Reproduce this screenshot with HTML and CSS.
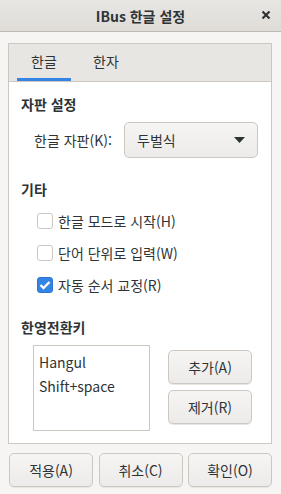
FILE: index.html
```html
<!DOCTYPE html>
<html lang="ko">
<head>
    <meta charset="UTF-8">
    <title>IBus 한글 설정</title>
    <link rel="stylesheet" href="styles.css">
</head>
<body>
    <div class="titlebar">
        <span class="title">IBus 한글 설정</span>
        <span class="close">
            <svg width="10" height="10" viewBox="0 0 10 10"><path d="M1.5 1.5 L8.5 8.5 M8.5 1.5 L1.5 8.5" stroke="#2e3436" stroke-width="2.2"/></svg>
        </span>
    </div>

    <div class="main">
        <div class="notebook">
            <div class="tabs">
                <div class="tab active">한글</div>
                <div class="tab">한자</div>
            </div>
            <div class="page">
                <h3>자판 설정</h3>
                <div class="row">
                    <span class="label">한글 자판(K):</span>
                    <div class="combo">
                        <span>두벌식</span>
                        <svg width="11" height="6" viewBox="0 0 11 6"><path d="M0 0 H11 L5.5 6 Z" fill="#2e3436"/></svg>
                    </div>
                </div>

                <h3 class="etc">기타</h3>
                <ul class="checks">
                    <li><span class="box"></span>한글 모드로 시작(H)</li>
                    <li><span class="box"></span>단어 단위로 입력(W)</li>
                    <li><span class="box on"><svg width="12" height="10" viewBox="0 0 12 10"><path d="M1.5 5 L4.5 8 L10.5 2" fill="none" stroke="#fff" stroke-width="2.4"/></svg></span>자동 순서 교정(R)</li>
                </ul>

                <h3 class="keys">한영전환키</h3>
                <div class="keyrow">
                    <div class="keylist">
                        <div>Hangul</div>
                        <div>Shift+space</div>
                    </div>
                    <div class="keybtns">
                        <button class="btn">추가(A)</button>
                        <button class="btn">제거(R)</button>
                    </div>
                </div>
            </div>
        </div>

        <div class="actions">
            <button class="btn">적용(A)</button>
            <button class="btn">취소(C)</button>
            <button class="btn">확인(O)</button>
        </div>
    </div>
</body>
</html>
```

FILE: styles.css
```css
* {
    padding: 0;
    margin: 0;
    box-sizing: border-box;
}

body {
    width: 281px;
    height: 494px;
    background: #f6f5f4;
    font-family: "Noto Sans CJK KR", "Noto Sans", sans-serif;
    font-size: 14px;
    color: #2e3436;
}

.titlebar {
    height: 32px;
    background: linear-gradient(#e8e6e3, #dfdcd8);
    border-bottom: 1px solid #c0bab3;
    display: flex;
    align-items: center;
    justify-content: center;
    position: relative;
}

.title {
    font-weight: bold;
    font-size: 14px;
}

.close {
    position: absolute;
    right: 10px;
    top: 10px;
    display: flex;
}

.main {
    padding: 11px 9px 0 8px;
}

.notebook {
    border: 1px solid #cdc7c2;
    height: 401px;
    display: flex;
    flex-direction: column;
}

.tabs {
    height: 38px;
    background: #e8e6e3;
    border-bottom: 1px solid #cdc7c2;
    display: flex;
    padding-left: 8px;
}

.tab {
    width: 54px;
    text-align: center;
    line-height: 34px;
    margin-right: 8px;
    color: #2e3436;
}

.tab.active {
    border-bottom: 3px solid #3584e4;
}

.page {
    flex: 1;
    background: #ffffff;
    padding: 12px 13px 0 12px;
}

h3 {
    font-size: 14px;
    font-weight: bold;
    line-height: 20px;
}

.row {
    display: flex;
    align-items: center;
    margin-top: 8px;
}

.label {
    width: 103px;
    padding-left: 13px;
}

.combo {
    width: 134px;
    height: 36px;
    border: 1px solid #cdc7c2;
    border-radius: 5px;
    background: linear-gradient(#f6f5f4, #edebe9);
    display: flex;
    align-items: center;
    justify-content: space-between;
    padding: 0 12px 0 12px;
}

.etc {
    margin-top: 21px;
}

.checks {
    list-style: none;
    padding-left: 16px;
    margin-top: 6px;
}

.checks li {
    display: flex;
    align-items: center;
    height: 32px;
}

.box {
    width: 16px;
    height: 16px;
    border: 1px solid #cdc7c2;
    border-radius: 3px;
    margin-right: 5px;
    display: flex;
    align-items: center;
    justify-content: center;
    background: #fff;
}

.box.on {
    background: #3584e4;
    border-color: #2a76d2;
}

.keys {
    margin-top: 16px;
}

.keyrow {
    display: flex;
    margin-top: 8px;
}

.keylist {
    margin-left: 12px;
    width: 117px;
    height: 86px;
    border: 1px solid #cdc7c2;
    padding: 4px 0 0 5px;
    line-height: 24px;
}

.keybtns {
    margin-left: 18px;
    display: flex;
    flex-direction: column;
    gap: 6px;
    padding-top: 5px;
}

.btn {
    font-family: inherit;
    font-size: 14px;
    color: #2e3436;
    width: 84px;
    height: 34px;
    border: 1px solid #cdc7c2;
    border-radius: 5px;
    background: linear-gradient(#f6f5f4, #edebe9);
    box-shadow: 0 1px #e8e6e3;
}

.actions {
    display: flex;
    justify-content: space-between;
    margin-top: 9px;
    padding-left: 1px;
}
```
